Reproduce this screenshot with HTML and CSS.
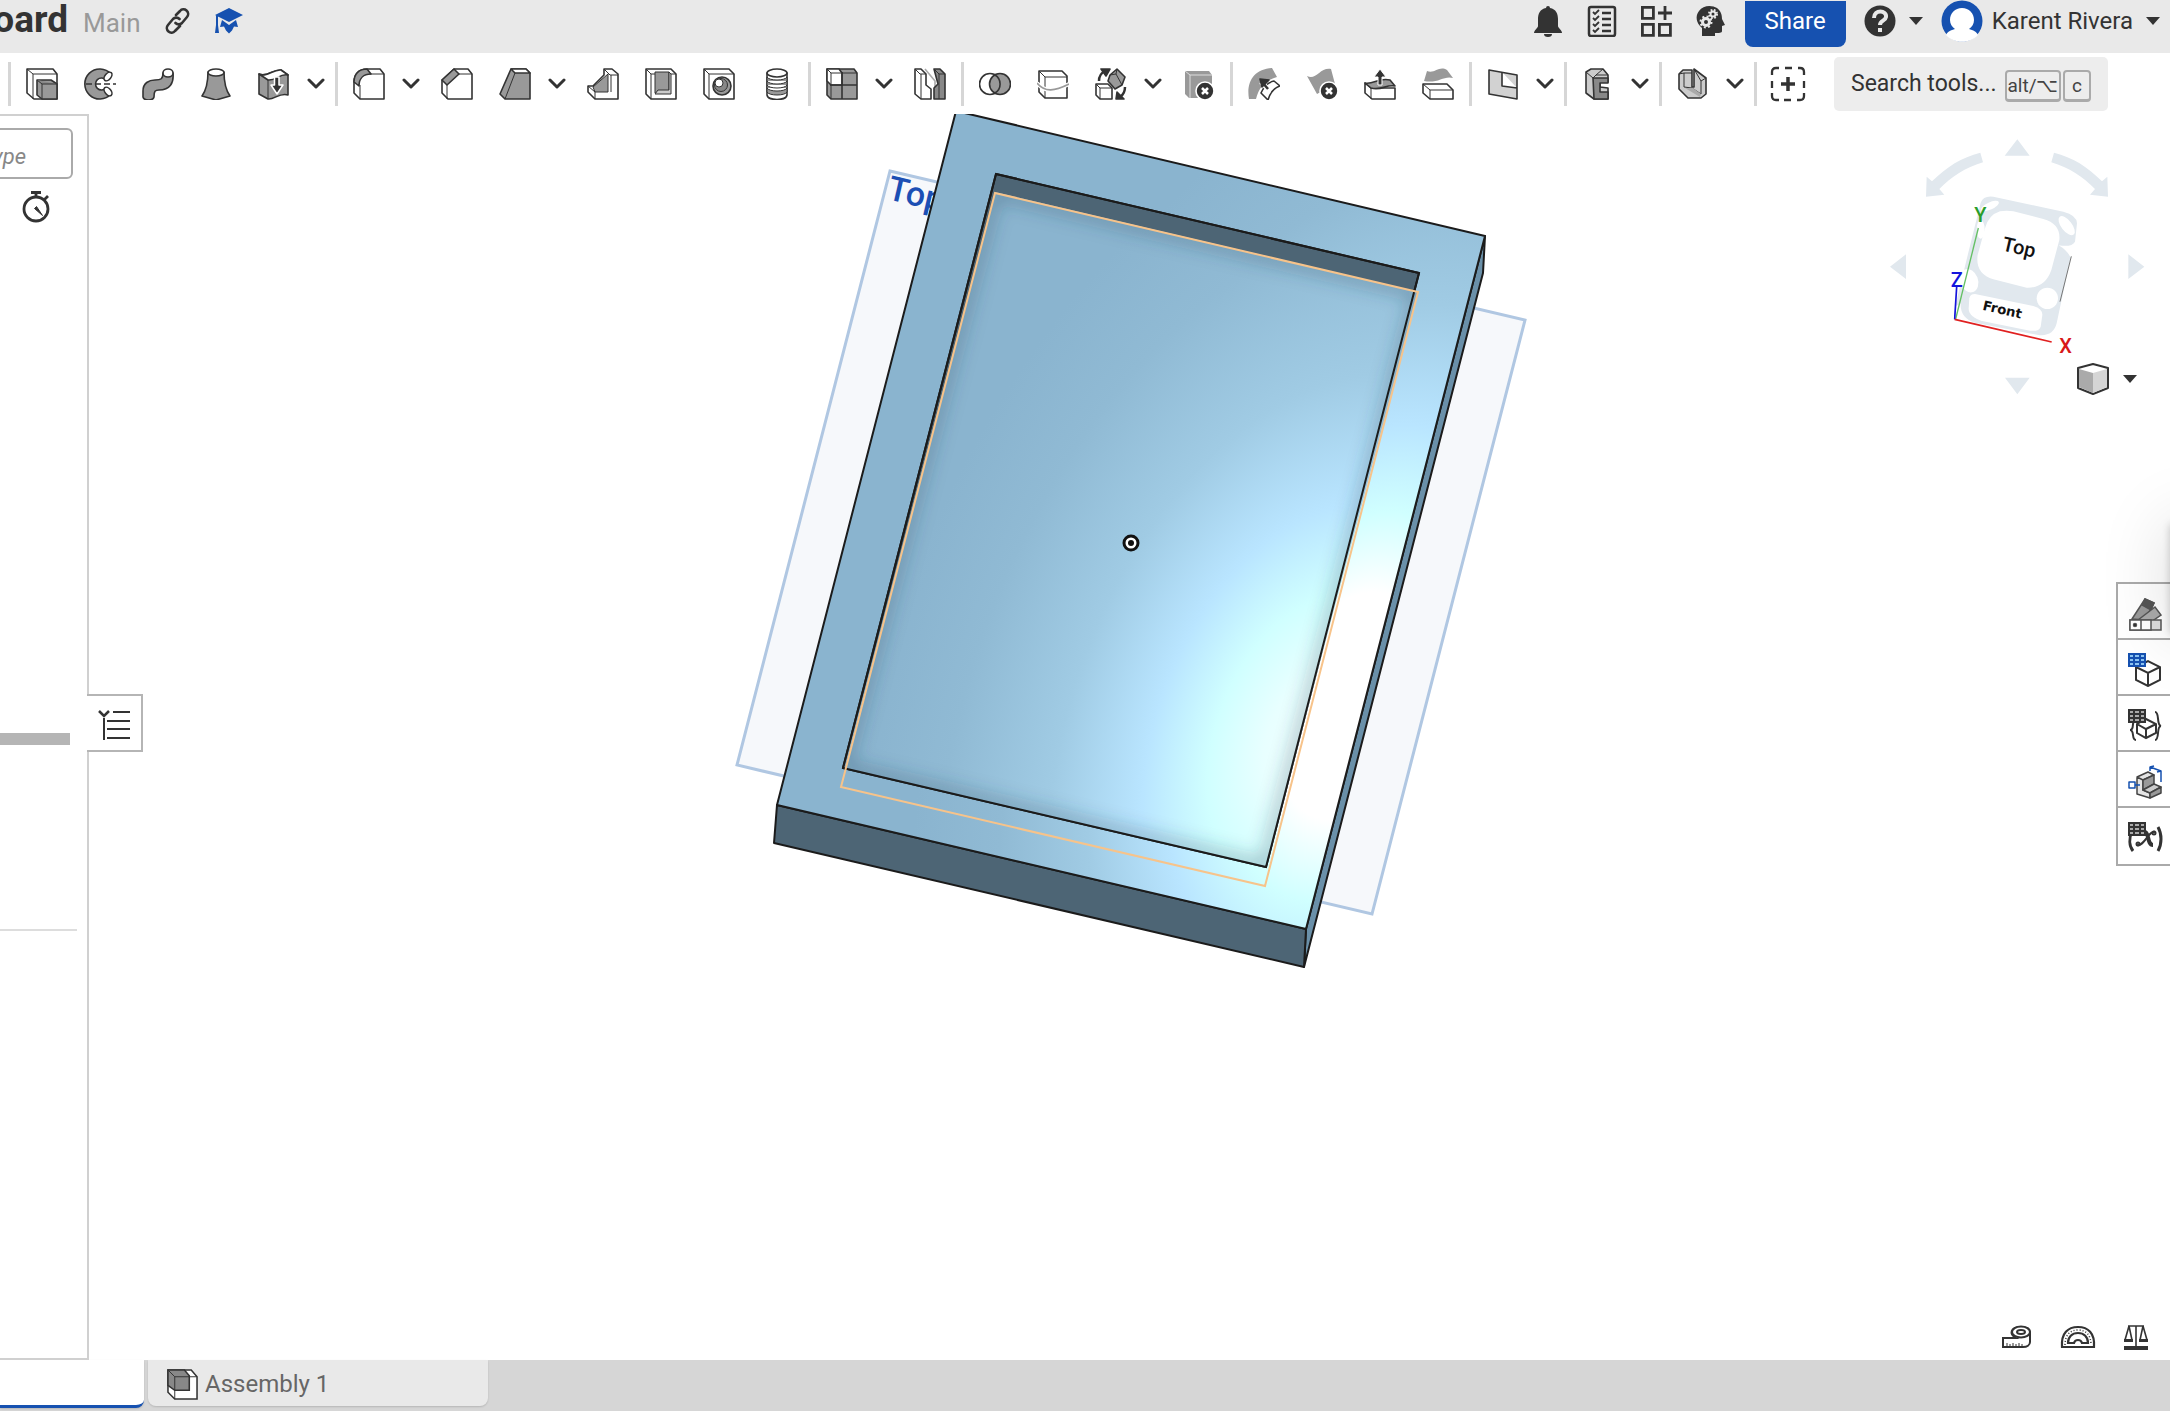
FILE: index.html
```html
<!DOCTYPE html>
<html lang="en">
<head>
<meta charset="utf-8">
<title>Keyboard | Assembly 1</title>
<link rel="stylesheet" href="styles.css">
</head>
<body>
<header class="header">
  <div class="doc">
    <h1 class="doc-title"><span>Keyboard</span></h1>
    <span class="doc-branch">Main</span>
  </div>
  <button class="plain link-btn" aria-label="Copy link"><svg width="26" height="26" viewBox="0 0 26 26" fill="none" stroke="#333" stroke-width="2.6" stroke-linecap="round"><path d="M11 7l4-4a4.300 4.300 0 0 1 7 6l-5 6a4.500 4.500 0 0 1-6.500 0M15 18l-5 5a4.300 4.300 0 0 1-7-6l5-6a4.500 4.500 0 0 1 6.500 0"/></svg></button>
  <button class="plain" aria-label="Education plan"><svg width="28" height="26" viewBox="0 0 28 26" fill="#1651b0"><path d="M14 0L28 7 14 14 0 7zM7 12l7 5 7-5 2 7-4-.500-2 4-3 3-3-3-2-4-4 .500zM1 7h2v10l1 8H0l1-8z"/></svg></button>
  <div class="account">
    <div class="account-icons">
      <button class="plain" aria-label="Notifications"><svg width="32" height="32" viewBox="0 0 32 32" fill="#333"><path d="M14 3a2 2 0 0 1 4 0c6 1 8 6 8 11v7c0 2 4 4 4 7H2c0-3 4-5 4-7v-7C6 9 8 4 14 3zM12 29h8a4 3 0 0 1-8 0z"/></svg></button>
      <button class="plain" aria-label="Tasks"><svg width="32" height="32" viewBox="0 0 32 32" fill="none" stroke="#333" stroke-width="2.500"><rect x="3" y="2" width="26" height="29" rx="2"/><path d="M16 8h9M16 14h9M16 20h9M16 26h9"/><path stroke-width="1.800" d="M7 7l2 2 4-4M7 13l2 2 4-4M7 19l2 2 4-4M7 25l2 2 4-4"/></svg></button>
      <button class="plain" aria-label="App store"><svg width="32" height="32" viewBox="0 0 32 32" fill="none" stroke="#333" stroke-width="2.800"><path d="M2.400 2.400h11v11h-11zM2.400 19.400h11v11h-11zM19.400 19.400h11v11h-11zM25 1v14M18 8h14"/></svg></button>
      <button class="plain" aria-label="Learning"><svg width="32" height="32" viewBox="0 0 32 32"><path fill="#333" d="M8 31v-8C2 18 1 11 5 6 9 0 18 0 23 3c4 3 5 7 5 11l3 6-3 1v5c0 2-3 2-7 2v3z"/><g fill="none" stroke="#e9e9e9"><circle cx="12" cy="17" r="3.500" stroke-width="3"/><circle cx="12" cy="17" r="5.500" stroke-width="2" stroke-dasharray="2 2.300"/><circle cx="19" cy="9" r="2.500" stroke-width="2"/><circle cx="19" cy="9" r="4" stroke-width="2" stroke-dasharray="1.700 1.500"/></g></svg></button>
    </div>
    <button class="share">Share</button>
    <button class="plain help" aria-label="Help"><svg width="32" height="32" viewBox="0 0 32 32"><circle cx="16" cy="16" r="15.500" fill="#333"/><path fill="none" stroke="#e9e9e9" stroke-width="4" d="M10 13c0-9 13-8 12-1-.500 4-6 3.500-6 8"/><path fill="#e9e9e9" d="M14 23h4v4h-4z"/></svg><svg width="14" height="8" viewBox="0 0 14 8"><path fill="#333" d="M0 0h14L7 8z"/></svg></button>
    <button class="plain user"><svg width="42" height="42" viewBox="0 0 42 42"><circle cx="21" cy="21" r="20.500" fill="#1651b0"/><path fill="#fff" d="M21 8c7 0 12 5 12 12 0 4-2 7-5 9 4 1 8 3 9 6-8 9-24 9-32 0 1-3 5-5 9-6-3-2-5-5-5-9 0-7 5-12 12-12z"/></svg><span>Karent Rivera</span><svg class="user-caret" width="14" height="8" viewBox="0 0 14 8"><path fill="#333" d="M0 0h14L7 8z"/></svg></button>
  </div>
</header>

<nav class="toolbar" aria-label="Feature tools">
  <i class="sep"></i>
  <button class="tool" aria-label="Extrude"><svg viewBox="0 0 32 32"><path fill="#fff" d="M1 1h26l4 5v25H8l-7-6z"/><path class="thin" d="M1 1l6 5h24M7 6v25"/><path fill="#999" d="M11 12h14l6 4v15H16l-5-4z"/><path class="thin" fill="#888" d="M11 12l5 4h15M16 16v15"/></svg></button>
  <button class="tool" aria-label="Revolve"><svg viewBox="0 0 32 32"><path fill="#999" d="M27 6A15 15 0 1 0 27 26l-5-6a6 6 0 1 1 0-8z"/><ellipse fill="#fff" cx="24" cy="8.500" rx="3" ry="5" transform="rotate(40 24 8.500)"/><ellipse fill="#fff" cx="24" cy="23.500" rx="3" ry="5" transform="rotate(-40 24 23.500)"/><path stroke-dasharray="6 3" d="M2 16h30"/></svg></button>
  <button class="tool" aria-label="Sweep"><svg viewBox="0 0 32 32"><path fill="#999" d="M1 29V23C1 15 7 12 13 12c6 0 8-1 8-7h10c1 10-3 17-14 17-4 0-5 1-5 7-1 4-10 4-11 0z"/><ellipse fill="#fff" cx="26" cy="5" rx="5" ry="4"/></svg></button>
  <button class="tool" aria-label="Loft"><svg viewBox="0 0 32 32"><path fill="#999" d="M8 4c0 10-1 17-6 24l14 4 14-4C25 21 24 14 24 4z"/><ellipse fill="#fff" cx="16" cy="4.500" rx="8" ry="3.500"/></svg></button>
  <button class="tool" aria-label="Thicken"><svg viewBox="0 0 32 32"><path fill="#999" d="M1 6c8 4 14-5 22-4l7 5v20c-8-3-14 5-20 4l-9-5z"/><path fill="#fff" d="M1 6c8 4 14-5 22-4l7 5C22 5 18 13 10 12z"/><path class="thin" d="M10 12v19"/><path fill="#333" stroke="#fff" stroke-width="1.500" d="M16.500 9h4.500v8h4l-6 9-6-9h3.500z"/></svg></button>
  <button class="more" aria-label="More solid tools"><svg viewBox="0 0 18 12"><path d="M2 2l7 7 7-7"/></svg></button>
  <i class="sep"></i>
  <button class="tool" aria-label="Fillet"><svg viewBox="0 0 32 32"><path fill="#fff" d="M1 14C1 6 6 1 14 1h13l4 5v25H7l-6-6z"/><path fill="#999" d="M1 14C1 6 6 1 14 1l4 5C11 6 6 10 6 18z"/><path class="thin" d="M17 6h14M7 17v14"/></svg></button>
  <button class="more" aria-label="More fillets"><svg viewBox="0 0 18 12"><path d="M2 2l7 7 7-7"/></svg></button>
  <button class="tool" aria-label="Chamfer"><svg viewBox="0 0 32 32"><path fill="#fff" d="M1 12L13 1h14l4 5v25H7l-6-6z"/><path fill="#999" d="M1 12L13 1l5 5L6 17z"/><path class="thin" d="M18 6h13M6 17v14"/></svg></button>
  <button class="tool" aria-label="Draft"><svg viewBox="0 0 32 32"><path fill="#999" d="M1 26L12 1h15l4 4v26H6z"/><path fill="#fff" d="M12 1h15l4 4H16z"/><path class="thin" d="M16 5L6 31"/></svg></button>
  <button class="more" aria-label="More drafts"><svg viewBox="0 0 18 12"><path d="M2 2l7 7 7-7"/></svg></button>
  <button class="tool" aria-label="Rib"><svg viewBox="0 0 32 32"><path fill="#fff" d="M17 1h8l6 5v25H8l-7-7v-6h5L17 7z"/><path class="thin" fill="#999" d="M6 19L21 6v18H8z"/><path class="thin" d="M17 1l6 6h8M1 18l7 6v7M24 7v17"/></svg></button>
  <button class="tool" aria-label="Shell"><svg viewBox="0 0 32 32"><path fill="#fff" d="M1 1h25l5 5v25H6l-5-5z"/><path class="thin" d="M1 1l5 5h25M6 6v25"/><path class="thin" fill="#999" d="M10 4h14v21H10z"/><path class="thin" fill="#ccc" d="M24 4l2 2v20H10l3-4h11z"/></svg></button>
  <button class="tool" aria-label="Hole"><svg viewBox="0 0 32 32"><path fill="#fff" d="M1 1h25l5 5v25H6l-5-5z"/><path class="thin" d="M1 1l5 5h25M6 6v25"/><circle fill="#999" cx="19" cy="18" r="9"/><circle class="thin" fill="#888" cx="18" cy="17" r="6.500"/><circle class="thin" fill="#fff" cx="16" cy="15" r="4"/></svg></button>
  <button class="tool" aria-label="External thread"><svg viewBox="0 0 32 32"><path fill="#fff" d="M6 5v22c1 6 19 6 20 0V5z"/><path class="thin" fill="#999" d="M6 9c2 4 18 4 20 0v15c-2 4-18 4-20 0zM6 13c2 4 18 4 20 0M6 17c2 4 18 4 20 0M6 20c2 4 18 4 20 0"/><ellipse fill="#fff" cx="16" cy="5" rx="10" ry="4"/></svg></button>
  <i class="sep"></i>
  <button class="tool" aria-label="Linear pattern"><svg viewBox="0 0 32 32"><path fill="#999" d="M1 1h27l3 4v26H5l-4-4z"/><path fill="#fff" d="M1 1h12l3 4v12H5l-4-4z"/><path class="thin" d="M1 1l4 4h26M5 5v26"/><path d="M16 4v27M4 17h27"/></svg></button>
  <button class="more" aria-label="More patterns"><svg viewBox="0 0 18 12"><path d="M2 2l7 7 7-7"/></svg></button>
  <button class="tool" aria-label="Mirror"><svg viewBox="0 0 32 32"><path fill="#fff" d="M1 1h6l5 5v11l5 4v10H7l-6-5z"/><path class="thin" d="M1 1l5 5h6M7 6v25"/><path stroke="#aaa" d="M11 1l10 12v16"/><path fill="#888" d="M20 1h6l5 5v25H20V20l4-4z"/><path class="thin" d="M20 1l5 5h6M25 6v25"/></svg></button>
  <i class="sep"></i>
  <button class="tool" aria-label="Boolean"><svg viewBox="0 0 32 32"><circle fill="#fff" cx="11" cy="16" r="10.500"/><circle fill="#999" cx="21" cy="16" r="10.500"/><path d="M16 7a10.500 10.500 0 0 1 0 18"/></svg></button>
  <button class="tool" aria-label="Split"><svg viewBox="0 0 32 32"><path fill="#fff" d="M2 3h23l5 5v22H8l-6-6z"/><path class="thin" d="M2 3l6 6h22M8 9v21"/><path stroke="#fff" stroke-width="4" d="M0 15c8 10 18 8 32 1"/><path stroke="#999" d="M0 15c8 10 18 8 32 1"/></svg></button>
  <button class="tool" aria-label="Transform"><svg viewBox="0 0 32 32"><path fill="#fff" d="M1 16h12l4 4v11H5l-4-4z"/><path class="thin" d="M1 16l4 4h12M5 20v11"/><path fill="#999" d="M22 1l8 8-3 8-7 4-7-8 2-6z"/><path class="thin" d="M22 1l-1 5 6 11M21 6l-6 1"/><path stroke-width="2.500" d="M4 13c0-5 2-8 6-10M30 19c0 5-2 8-5 10"/><path fill="#333" d="M6 1h9l-4 7zM21 31l1-7 7 7z"/></svg></button>
  <button class="more" aria-label="More transforms"><svg viewBox="0 0 18 12"><path d="M2 2l7 7 7-7"/></svg></button>
  <button class="tool" aria-label="Delete part"><svg viewBox="0 0 32 32"><path fill="#999" stroke="none" d="M2 3h24l3 4v23H6l-4-4z"/><path stroke="#ddd" class="thin" d="M2 3l5 4h22M7 7v23"/><circle cx="22" cy="23" r="9" fill="#333" stroke="#fff"/><path stroke="#fff" stroke-width="2.500" d="M19 20l6 6M25 20l-6 6"/></svg></button>
  <i class="sep"></i>
  <button class="tool" aria-label="Move face"><svg viewBox="0 0 32 32"><path fill="#999" stroke="none" d="M1 31C-2 14 6 1 24 0l5 9C18 12 11 19 8 31z"/><path fill="#fff" d="M13 25c3-7 8-11 13-12l6 5c-6 2-10 7-12 14z"/><path stroke="#fff" stroke-width="5" d="M20 21l-7-7"/><path stroke-width="2.500" d="M20 21l-6-7"/><path fill="#333" d="M12 11l9 1-7 7z"/></svg></button>
  <button class="tool" aria-label="Delete face"><svg viewBox="0 0 32 32"><path fill="#999" stroke="none" d="M1 8c9 5 13-9 24-7l4 15-18 10z"/><circle cx="23" cy="23" r="9" fill="#333" stroke="#fff"/><path stroke="#fff" stroke-width="2.500" d="M20 20l6 6M26 20l-6 6"/></svg></button>
  <button class="tool" aria-label="Modify fillet"><svg viewBox="0 0 32 32"><path fill="#fff" d="M1 15l6 5h24v11H8l-7-6z"/><path fill="#999" d="M1 15c8 2 14-6 25-3l5 6c-9-2-13 5-24 2z"/><path class="thin" d="M7 20v11"/><path fill="#333" stroke="#fff" stroke-width="1" d="M14 17V9h-4l6-8 6 8h-4v8z"/></svg></button>
  <button class="tool" aria-label="Replace face"><svg viewBox="0 0 32 32"><path fill="#999" stroke="none" d="M5 3c8 3 12-6 20-1l6 8c-9-3-15 6-29 3z"/><path fill="#fff" d="M1 16h24l6 6v9H8l-7-6z"/><path class="thin" d="M1 16l7 6h23M8 22v9"/></svg></button>
  <i class="sep"></i>
  <button class="tool" aria-label="Plane"><svg viewBox="0 0 32 32"><path fill="#d2d2d2" d="M2 2l28 5v24L2 26zM15 4v14l15 2"/></svg></button>
  <button class="more" aria-label="More planes"><svg viewBox="0 0 18 12"><path d="M2 2l7 7 7-7"/></svg></button>
  <i class="sep"></i>
  <button class="tool" aria-label="Frame"><svg viewBox="0 0 32 32"><path fill="#ccc" d="M4 4l5-3h12l5 6v7h-8v5l8 1v11H12l-8-6z"/><path fill="#888" d="M11 10h15v5h-8v9h8v7H12z"/><path class="thin" d="M4 4l7 6 3-3h12M21 1l-7 6"/></svg></button>
  <button class="more" aria-label="More frame tools"><svg viewBox="0 0 18 12"><path d="M2 2l7 7 7-7"/></svg></button>
  <i class="sep"></i>
  <button class="tool" aria-label="Sheet metal"><svg viewBox="0 0 32 32"><path fill="#ccc" d="M2 6l4-4h9v17h2V1l12 9v16l-5 4H11L2 21z"/><path class="thin" d="M2 6l5-1h8M7 5v14l8 1 9 6V13l5-3M17 1l7 12"/><path fill="#aaa" stroke="none" d="M8 20h8l8 6-1 3z"/></svg></button>
  <button class="more" aria-label="More sheet metal tools"><svg viewBox="0 0 18 12"><path d="M2 2l7 7 7-7"/></svg></button>
  <i class="sep"></i>
  <button class="tool wide" aria-label="Add custom features"><svg viewBox="0 0 36 36"><path d="M2 9V6q0-4 4-4h3M15 2h7M28 2h2q4 0 4 4v3M34 15v7M34 27v3q0 4-4 4h-3M21 34h-7M9 34H6q-4 0-4-4v-3M2 22v-7"/><path stroke-width="3.500" d="M18 11v14M11 18h14"/></svg></button>
  <label class="search"><input type="text" placeholder="Search tools..." aria-label="Search tools"><kbd>alt/⌥</kbd><kbd class="key-c">c</kbd></label>
</nav>

<main class="workspace">
  <svg class="model" viewBox="0 113 2170 1247" preserveAspectRatio="xMidYMin slice">
    <defs>
      <radialGradient id="rim" gradientUnits="userSpaceOnUse" cx="0" cy="0" r="1" gradientTransform="translate(1352 705) rotate(17) scale(410 690)">
        <stop offset="0" stop-color="#fff"/><stop offset=".17" stop-color="#fff"/><stop offset=".29" stop-color="#d0ffff"/><stop offset=".42" stop-color="#b9e5ff"/><stop offset=".6" stop-color="#a0cbe4"/><stop offset=".8" stop-color="#90bad4"/><stop offset="1" stop-color="#8ab4cf"/>
      </radialGradient>
      <radialGradient id="floor" gradientUnits="userSpaceOnUse" cx="0" cy="0" r="1" gradientTransform="translate(1310 740) rotate(20) scale(430 680)">
        <stop offset="0" stop-color="#efffff"/><stop offset=".1" stop-color="#e8ffff"/><stop offset=".22" stop-color="#d0ffff"/><stop offset=".36" stop-color="#b9e5ff"/><stop offset=".56" stop-color="#a0cbe4"/><stop offset=".8" stop-color="#90bad4"/><stop offset="1" stop-color="#8ab4cf"/>
      </radialGradient>
      <clipPath id="floorClip"><path d="M995 191L1418 291 1266 866 843 767z"/></clipPath>
      <filter id="soft" x="-10%" y="-10%" width="120%" height="120%"><feGaussianBlur stdDeviation="9"/></filter>
    </defs>
    <path d="M890 170L1525 319 1372 913 737 764z" fill="#f6f8fb" stroke="#b0c7e2" stroke-width="3"/>
    <text class="plane-name" transform="translate(886 198) rotate(13)">Top</text>
    <g stroke="#1b1b1b" stroke-width="2" stroke-linejoin="round">
      <path fill="#6a90a9" d="M1485 235L1483 272 1304 966 1306 928z"/>
      <path fill="#4d6575" d="M777 804L1306 928 1304 966 774 842z"/>
      <path fill="url(#rim)" d="M956 110L1485 235 1306 928 777 804z"/>
      <path fill="#4d6575" d="M996 173L1419 272 1266 866 843 767z"/>
    </g>
    <path fill="url(#floor)" d="M995 191L1418 291 1266 866 844 767z"/>
    <g clip-path="url(#floorClip)"><path d="M843 767L995 191 1418 291 1266 866z" fill="none" stroke="#23485f" stroke-opacity=".36" stroke-width="12" filter="url(#soft)"/></g>
    <path d="M996 173L1419 272 1266 866 843 767z" fill="none" stroke="#1b1b1b" stroke-width="2"/>
    <path d="M995 192L1418 291 1265 885 841 786z" fill="none" stroke="#f7c38a" stroke-width="2"/>
    <circle cx="1131" cy="542" r="7" fill="#fff" stroke="#111" stroke-width="3"/><circle cx="1131" cy="542" r="3" fill="#111"/>
  </svg>

  <aside class="features">
    <input class="filter" type="text" placeholder="Filter by name or type" aria-label="Filter by name or type">
    <button class="plain timer" aria-label="Regeneration times"><svg width="28" height="32" viewBox="0 0 28 32" fill="none" stroke="#333" stroke-width="2.800"><circle cx="14" cy="18" r="12"/><path d="M9 1.500h10M14 2v4M22 9l4-4"/><path fill="#333" stroke-width="1" d="M12.500 17.500l2-2 6 9z"/></svg></button>
    <div class="rollback"></div>
    <hr class="divider">
  </aside>
  <button class="list-toggle" aria-label="Toggle feature list"><svg width="32" height="32" viewBox="0 0 32 32" fill="none" stroke="#333" stroke-width="2"><path d="M1 2l5 5 5-5" stroke-width="2.500"/><path d="M6 9v22M15 3h17M9 12h23M9 20h23M9 29h23"/></svg></button>

  <div class="right-side">
    <div class="cube">
      <svg viewBox="0 0 930 870" width="310" height="290">
        <g fill="#e1e8ee"><path d="M472 58l37 49h-75zM472 823l-37-50h74zM90 440l48-37v74zM853 440l-48-37v74z"/>
          <path d="M361 98l8 29C315 143 275 170 238 207l15 17-55 6 2-60 16 14C260 140 305 112 361 98zM582 98l-8 29c54 16 94 43 131 80l-15 17 54 6-2-60-16 14C683 140 638 112 582 98z"/>
          <path d="M362 248Q370 226 400 230L610 275Q650 285 651 310L645 365Q636 382 596 376Q620 390 632 412L590 610Q580 650 535 645L345 608Q300 595 302 550L285 560z"/></g>
        <g fill="#fff"><path d="M420 274Q440 270 460 274L550 297Q603 312 598 360L574 450Q555 505 500 503L400 478Q345 462 353 405L375 325Q385 285 420 274z"/><path d="M345 522L520 558Q548 567 547 585L542 620Q538 635 510 632L370 604Q325 590 326 565L328 535Q330 522 345 522z"/>
          <ellipse cx="390" cy="258" rx="29" ry="11" transform="rotate(-24 390 258)"/><ellipse cx="620" cy="317" rx="16" ry="34" transform="rotate(-38 620 317)"/><ellipse cx="562" cy="535" rx="32" ry="32"/><ellipse cx="327" cy="482" rx="27" ry="36" transform="rotate(-20 327 482)"/><ellipse cx="362" cy="328" rx="12" ry="28"/></g>
        <path d="M634 409L600 545" stroke="#777" stroke-width="3"/>
        <path d="M355 324L287 597" stroke="#65c065" stroke-width="4"/><path d="M290 500L284 598" stroke="#1414dc" stroke-width="5"/><path d="M284 598L575 666" stroke="#e02020" stroke-width="5"/>
        <g class="axis"><text x="343" y="306" fill="#2a9d2a" class="axis-y">Y</text><text x="272" y="500" fill="#1414dc">Z</text><text x="598" y="700" fill="#d81818">X</text></g>
        <text class="face" transform="translate(424 391) rotate(13)">Top</text>
        <text class="face-front" transform="translate(366 569) rotate(13)">Front</text>
      </svg>
      <button class="plain view-menu" aria-label="Camera and render options"><svg width="32" height="32" viewBox="0 0 32 32" stroke="#333" stroke-width="2" stroke-linejoin="round"><path fill="#fff" d="M1 5l15-4 15 4v20l-15 6-15-6z"/><path stroke="none" fill="#aaa" d="M2 6l14 4v20L2 24z"/><path stroke="none" fill="#d5d5d5" d="M30 6l-14 4v20l14-6z"/></svg><svg width="14" height="8" viewBox="0 0 14 8"><path fill="#333" d="M0 0h14L7 8z"/></svg></button>
    </div>
    <div class="panel-tabs">
      <button aria-label="Appearance"><svg viewBox="0 0 34 34" stroke="#555" stroke-width="1.500"><path fill="#999" d="M4 22L17 2l9 4-9 17z"/><path fill="#555" d="M17 2l9 4-3 7-9-5z"/><path fill="#aaa" d="M10 23l17-13 6 8-13 9z"/><path fill="#ddd" d="M2 23h31v10H2z"/><path fill="#fff" d="M2 23h11v10H2zM13 23h10v10H13z"/><circle cx="7" cy="28" r="1.500"/></svg></button>
      <button aria-label="Configurations"><svg viewBox="0 0 34 34" stroke="#333" stroke-width="2"><path fill="#fff" d="M8 14l12-6 12 6v13l-12 6-12-6zM8 14l12 6 12-6M20 20v13"/><path fill="#8cc4f2" stroke="#1651b0" d="M1 1h16v12H1zM1 5h16M1 9h16M6 1v12M12 1v12"/></svg></button>
      <button aria-label="Configuration variables"><svg viewBox="0 0 34 34" stroke="#333" stroke-width="2"><path fill="#fff" d="M9 15l9-5 10 5v9l-10 5-9-5zM9 15l9 5 10-5M18 20v9"/><path fill="none" d="M7 12c-4 0 0 9-5 9 5 0 1 10 6 10M27 3c5 0 1 13 6 14-5 0-1 14-6 14"/><path fill="#aaa" d="M1 1h16v12H1zM1 5h16M1 9h16M6 1v12M12 1v12"/></svg></button>
      <button aria-label="Custom properties"><svg viewBox="0 0 34 34" stroke="#444" stroke-width="1.500" stroke-linejoin="round"><path fill="#e4e4e4" d="M9 12l11-5 6 3-11 5zM9 12l6 3v10l7 3v5L9 29z"/><path fill="#999" d="M15 15l11-5v9l-11 6z"/><path fill="#ccc" d="M15 25l11-6 7 3-11 6z"/><path fill="#999" d="M22 28l11-6v6l-11 5z"/><path fill="none" stroke="#1651b0" d="M1 17h6v6H1zM7 20h5M22 6V2l11 4v11M22 2l4-1M33 6l-4 1"/></svg></button>
      <button aria-label="Variables"><svg viewBox="0 0 34 34" stroke="#333" stroke-width="2" fill="none"><path stroke-width="3" d="M4 9C1 16 1 24 5 29M30 5c4 7 4 17 0 24"/><path stroke-width="4" d="M17 10c4 0 2 13 8 13"/><path d="M27 10c-6-2-11 15-18 13"/><circle cx="26" cy="11" r="1.500"/><circle cx="10" cy="22" r="1.500"/><path fill="#aaa" d="M1 1h16v12H1zM1 5h16M1 9h16M6 1v12M12 1v12"/></svg></button>
    </div>
    <div class="measure">
      <button class="plain" aria-label="Measure"><svg width="30" height="24" viewBox="0 0 30 24" fill="#fff" stroke="#333" stroke-width="2"><path d="M1 13h13c-7-4-6-11 5-11 7 0 9 2 9 5v10c0 3-3 5-7 5H1z"/><ellipse cx="19" cy="7" rx="9" ry="5.500"/><ellipse cx="19" cy="7" rx="4" ry="2"/><path stroke-width="1" d="M5 22v-4M8 22v-3M11 22v-4M14 22v-3M17 22v-4M20 22v-3"/></svg></button>
      <button class="plain" aria-label="Angle"><svg width="36" height="24" viewBox="0 0 36 24" fill="#fff" stroke="#333" stroke-width="2.200"><path d="M2 22C1 8 8 2 18 2s17 6 16 20z"/><path stroke-width="1.500" stroke-dasharray="1 2" d="M5 20C5 10 10 5 18 5s13 5 13 15"/><path d="M8 18c0-6 4-10 10-10s10 4 10 10h-6c-1-4-7-4-8 0z"/></svg></button>
      <button class="plain" aria-label="Mass properties"><svg width="24" height="26" viewBox="0 0 24 26" fill="none" stroke="#333" stroke-width="1.600"><path d="M4 2h16M12 2v20M5 2L1 16h7L5 2M19 2l-3 14h7L19 2"/><path fill="#333" stroke="none" d="M0 15h9v3H0zM15 15h9v3h-9zM0 22h24v4H0z"/></svg></button>
    </div>
  </div>
  <div class="drawer"></div>
</main>

<footer class="tabs">
  <button class="tab tab-active" aria-label="Part Studio 1"></button>
  <button class="tab"><svg width="31" height="31" viewBox="0 0 32 32" fill="none" stroke="#333" stroke-width="1.600"><path fill="#fff" d="M1 1h24l6 7v23H8l-7-7z"/><path fill="#888" d="M1 1h17l5 6v15H8l-7-5z"/><path stroke-width="1" d="M1 1l7 7h23M8 8v23"/></svg>Assembly 1</button>
</footer>
</body>
</html>
```
FILE: styles.css
```css
* { box-sizing: border-box; }

body {
  margin: 0;
  min-height: 100vh;
  display: flex;
  flex-direction: column;
  overflow: hidden;
  background: #fff;
  color: #333;
  font-family: Roboto, "Liberation Sans", sans-serif;
  font-size: 24px;
}

button, input, kbd { font: inherit; color: inherit; }
button { cursor: pointer; padding: 0; }
svg { display: block; flex: none; }

.plain {
  display: flex;
  align-items: center;
  border: 0;
  background: none;
}

/* Header */
.header {
  display: flex;
  align-items: center;
  height: 53px;
  padding: 0 10px 12px 0;
  background: #e9e9e9;
  gap: 24px;
}
.doc { display: flex; align-items: baseline; gap: 15px; line-height: 42px; padding-top: 2px; }
.doc-title {
  display: flex;
  justify-content: flex-end;
  width: 68px;
  margin: 0;
  font-size: 37px;
  font-weight: 700;
}
.doc-branch { font-size: 26px; color: #999; }
.account { display: flex; align-items: center; margin-left: auto; height: 40px; }
.account-icons { display: flex; gap: 22px; }
.share {
  align-self: flex-start;
  height: 46px;
  width: 101px;
  margin: 0 18px 0 19px;
  padding-bottom: 6px;
  border: 0;
  border-radius: 0 0 8px 8px;
  background: #1651b0;
  color: #fff;
}
.help { gap: 13px; }
.user { gap: 9px; margin-left: 18px; white-space: nowrap; }
.user-caret { margin-left: 4px; }

/* Toolbar */
.toolbar {
  display: flex;
  align-items: center;
  height: 61px;
  padding-left: 6px;
}
.sep { flex: none; width: 3px; height: 44px; margin: 0 2px; background: #d6d6d6; }
.tool, .more {
  display: flex;
  flex: none;
  align-items: center;
  justify-content: center;
  height: 44px;
  border: 0;
  background: none;
}
.tool { width: 58px; }
.tool svg {
  width: 32px;
  height: 32px;
  fill: none;
  stroke: #333;
  stroke-width: 1.6;
  stroke-linejoin: round;
}
.tool .thin { stroke-width: 1; }
.tool.wide svg { width: 36px; height: 36px; stroke-width: 2.3; }
.more { width: 26px; margin-right: 4px; }
.more svg {
  width: 18px;
  height: 12px;
  fill: none;
  stroke: #333;
  stroke-width: 3;
  stroke-linecap: round;
  stroke-linejoin: round;
}
.search {
  display: flex;
  align-items: center;
  gap: 2px;
  height: 54px;
  margin-left: 17px;
  padding: 0 17px;
  border-radius: 5px;
  background: #ededed;
  font-size: 23px;
}
.search input {
  width: 152px;
  padding: 0;
  border: 0;
  outline: 0;
  background: none;
}
.search input::placeholder { color: #333; opacity: 1; }
.search kbd {
  flex: none;
  width: 56px;
  height: 32px;
  margin-top: 4px;
  border: 2px solid #aaa;
  border-bottom-width: 3px;
  border-radius: 4px;
  font-size: 19px;
  line-height: 27px;
  text-align: center;
  white-space: nowrap;
  color: #444;
}
.search .key-c { width: 28px; }

/* Workspace */
.workspace {
  position: relative;
  flex: 1;
  display: flex;
  align-items: flex-start;
  overflow: hidden;
}
.model { position: absolute; inset: 0; width: 100%; height: 100%; }
.plane-name { font-size: 34px; font-weight: 500; fill: #1c4fb4; }

.features {
  position: relative;
  align-self: stretch;
  display: flex;
  flex-direction: column;
  align-items: flex-end;
  width: 89px;
  border: 2px solid #d0d0d0;
  border-left: 0;
  background: #fff;
}
.filter {
  width: 320px;
  height: 51px;
  margin: 12px 14px 12px 0;
  padding: 6px 45px 0 12px;
  border: 2px solid #aaa;
  border-radius: 6px;
  font-size: 22px;
  font-style: italic;
  text-align: right;
}
.filter::placeholder { color: #888; opacity: 1; }
.timer { margin-right: 37px; }
.rollback { width: 70px; height: 12px; margin: 510px 17px 0 0; background: #b5b5b5; }
.divider { width: 77px; margin: 184px 10px 0 0; border: 0; border-top: 2px solid #ddd; }

.list-toggle {
  position: relative;
  width: 56px;
  height: 58px;
  margin: 580px 0 0 -2px;
  padding: 4px 0 0 11px;
  border: 2px solid #b5b5b5;
  border-left: 0;
  background: #fff;
}

.right-side {
  position: relative;
  align-self: stretch;
  display: flex;
  flex-direction: column;
  align-items: flex-end;
  margin-left: auto;
  padding-top: 6px;
}
.cube { position: relative; }
.view-menu { position: absolute; left: 217px; top: 243px; gap: 14px; }
.axis { font-size: 60px; font-weight: 500; }
.face { font-size: 60px; font-weight: 500; fill: #111; }
.face-front { font-family: "DejaVu Sans", sans-serif; font-size: 40px; font-weight: 700; fill: #111; }

.panel-tabs {
  display: flex;
  flex-direction: column;
  width: 54px;
  margin-top: 172px;
  border: 2px solid #aaa;
  border-right: 0;
}
.panel-tabs button {
  height: 56px;
  padding: 5px 0 0 9px;
  border: 0;
  border-bottom: 2px solid #aaa;
  background: #fff;
}
.panel-tabs button:last-child { border-bottom: 0; }
.panel-tabs svg { width: 36px; height: 34px; }

.measure { display: flex; align-items: center; gap: 28px; margin: auto 22px 10px 0; }

.drawer {
  position: absolute;
  left: 100%;
  top: 410px;
  width: 60px;
  height: 110px;
  box-shadow: 0 0 8px rgba(0, 0, 0, .2), 0 0 70px rgba(0, 0, 0, .15);
}

/* Tab bar */
.tabs { display: flex; gap: 4px; height: 51px; background: #d6d6d6; }
.tab {
  display: flex;
  align-items: center;
  gap: 7px;
  width: 340px;
  height: 46px;
  padding: 2px 0 0 19px;
  border: 0;
  border-radius: 0 0 8px 8px;
  background: #e9e9e9;
  box-shadow: 0 1px 2px rgba(0, 0, 0, .15);
  font-size: 24px;
  color: #666;
}
.tab-active {
  width: 144px;
  height: 48px;
  border-bottom: 3px solid #1651b0;
  border-radius: 0 0 8px 0;
  background: #fff;
}
```
